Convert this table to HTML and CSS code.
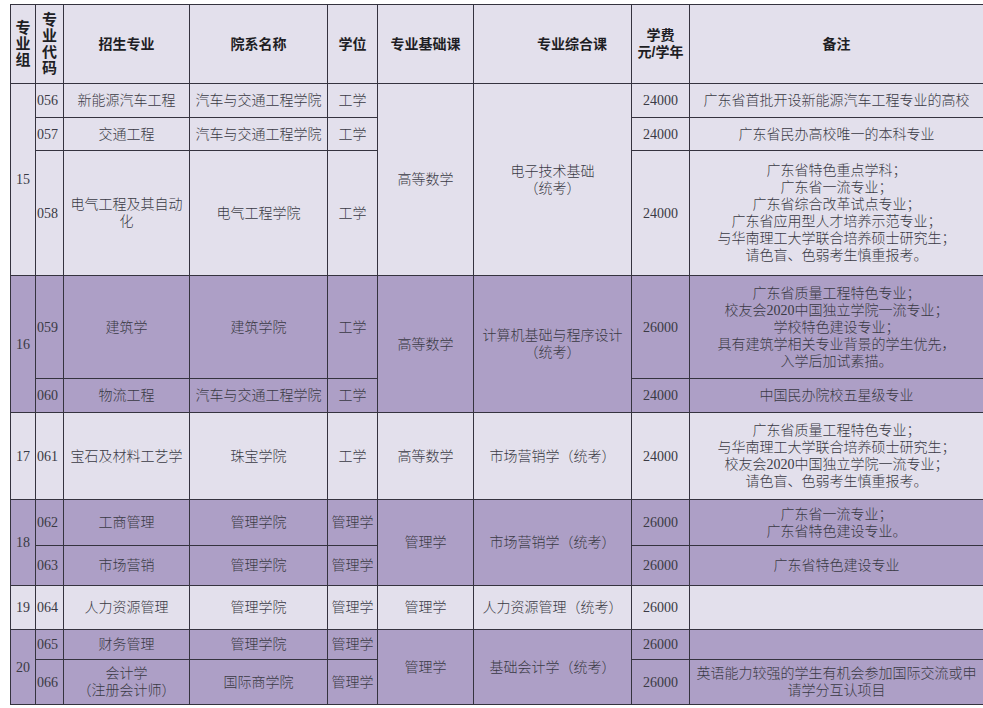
FILE: index.html
```html
<!DOCTYPE html>
<html lang="zh-CN">
<head>
<meta charset="utf-8">
<title>招生专业</title>
<link rel="stylesheet" href="styles.css">
</head>
<body>
<div class="page">
<table class="plan">
  <colgroup>
    <col class="c-grp"><col class="c-code"><col class="c-major"><col class="c-dept"><col class="c-deg"><col class="c-base"><col class="c-comp"><col class="c-fee"><col class="c-note">
  </colgroup>
  <thead>
    <tr class="h-head">
      <th class="stack">专<br>业<br>组</th>
      <th class="stack">专<br>业<br>代<br>码</th>
      <th>招生专业</th>
      <th>院系名称</th>
      <th>学位</th>
      <th>专业基础课</th>
      <th class="comp-h">专业综合课</th>
      <th>学费<br>元/学年</th>
      <th>备注</th>
    </tr>
  </thead>
  <tbody class="light">
    <tr class="h34">
      <td rowspan="3">15</td><td class="code">056</td><td>新能源汽车工程</td><td>汽车与交通工程学院</td><td>工学</td>
      <td rowspan="3">高等数学</td><td rowspan="3">电子技术基础<br>（统考）</td>
      <td>24000</td><td>广东省首批开设新能源汽车工程专业的高校</td>
    </tr>
    <tr class="h33">
      <td class="code">057</td><td>交通工程</td><td>汽车与交通工程学院</td><td>工学</td>
      <td>24000</td><td>广东省民办高校唯一的本科专业</td>
    </tr>
    <tr class="h125">
      <td class="code">058</td><td>电气工程及其自动<br>化</td><td>电气工程学院</td><td>工学</td>
      <td>24000</td><td>广东省特色重点学科；<br>广东省一流专业；<br>广东省综合改革试点专业；<br>广东省应用型人才培养示范专业；<br>与华南理工大学联合培养硕士研究生；<br>请色盲、色弱考生慎重报考。</td>
    </tr>
  </tbody>
  <tbody class="dark">
    <tr class="h103">
      <td rowspan="2">16</td><td class="code">059</td><td>建筑学</td><td>建筑学院</td><td>工学</td>
      <td rowspan="2">高等数学</td><td rowspan="2">计算机基础与程序设计<br>（统考）</td>
      <td>26000</td><td>广东省质量工程特色专业；<br>校友会2020中国独立学院一流专业；<br>学校特色建设专业；<br>具有建筑学相关专业背景的学生优先，<br>入学后加试素描。</td>
    </tr>
    <tr class="h34">
      <td class="code">060</td><td>物流工程</td><td>汽车与交通工程学院</td><td>工学</td>
      <td>24000</td><td>中国民办院校五星级专业</td>
    </tr>
  </tbody>
  <tbody class="light">
    <tr class="h87">
      <td>17</td><td class="code">061</td><td>宝石及材料工艺学</td><td>珠宝学院</td><td>工学</td>
      <td>高等数学</td><td>市场营销学（统考）</td>
      <td>24000</td><td>广东省质量工程特色专业；<br>与华南理工大学联合培养硕士研究生；<br>校友会2020中国独立学院一流专业；<br>请色盲、色弱考生慎重报考。</td>
    </tr>
  </tbody>
  <tbody class="dark">
    <tr class="h46">
      <td rowspan="2">18</td><td class="code">062</td><td>工商管理</td><td>管理学院</td><td>管理学</td>
      <td rowspan="2">管理学</td><td rowspan="2">市场营销学（统考）</td>
      <td>26000</td><td>广东省一流专业；<br>广东省特色建设专业。</td>
    </tr>
    <tr class="h40">
      <td class="code">063</td><td>市场营销</td><td>管理学院</td><td>管理学</td>
      <td>26000</td><td>广东省特色建设专业</td>
    </tr>
  </tbody>
  <tbody class="light">
    <tr class="h44">
      <td>19</td><td class="code">064</td><td>人力资源管理</td><td>管理学院</td><td>管理学</td>
      <td>管理学</td><td>人力资源管理（统考）</td>
      <td>26000</td><td></td>
    </tr>
  </tbody>
  <tbody class="dark">
    <tr class="h30">
      <td rowspan="2">20</td><td class="code">065</td><td>财务管理</td><td>管理学院</td><td>管理学</td>
      <td rowspan="2">管理学</td><td rowspan="2">基础会计学（统考）</td>
      <td>26000</td><td></td>
    </tr>
    <tr class="h45">
      <td class="code">066</td><td>会计学<br>（注册会计师）</td><td>国际商学院</td><td>管理学</td>
      <td>26000</td><td>英语能力较强的学生有机会参加国际交流或申<br>请学分互认项目</td>
    </tr>
  </tbody>
</table>
</div>
</body>
</html>
```

FILE: styles.css
```css
html, body {
  margin: 0;
  padding: 0;
  background: #ffffff;
}

.page {
  padding: 4px 0 0 10px;
}

.plan {
  border-collapse: collapse;
  table-layout: fixed;
  width: 973px;
  font-family: "Liberation Serif", "Noto Sans CJK SC", serif;
  font-size: 14px;
  line-height: 17px;
  color: #3a3a44;
}

.c-grp { width: 25px; }
.c-code { width: 28px; }
.c-major { width: 126px; }
.c-dept { width: 138px; }
.c-deg { width: 50px; }
.c-base { width: 96px; }
.c-comp { width: 158px; }
.c-fee { width: 58px; }
.c-note { width: 294px; }

.plan th,
.plan td {
  border: 1px solid #35333f;
  padding: 0 1px;
  text-align: center;
  vertical-align: middle;
  white-space: nowrap;
  overflow: hidden;
}

.plan td {
  font-weight: 300;
}

.plan th {
  background: #e3e0ec;
  color: #1e1e24;
  font-weight: 700;
  font-family: "Liberation Sans", "Noto Sans CJK SC", sans-serif;
  font-size: 14px;
}

.plan th.stack {
  font-size: 15px;
  line-height: 16px;
}

.plan th.comp-h {
  padding-left: 40px;
}

.plan td.code {
  text-align: left;
  padding-left: 1px;
}

.light td { background: #e3e0ec; }
.dark td { background: #ad9fc6; }

.h-head { height: 79px; }
.h30 { height: 30px; }
.h33 { height: 33px; }
.h34 { height: 34px; }
.h40 { height: 40px; }
.h44 { height: 44px; }
.h45 { height: 45px; }
.h46 { height: 46px; }
.h87 { height: 87px; }
.h103 { height: 103px; }
.h125 { height: 125px; }
```
